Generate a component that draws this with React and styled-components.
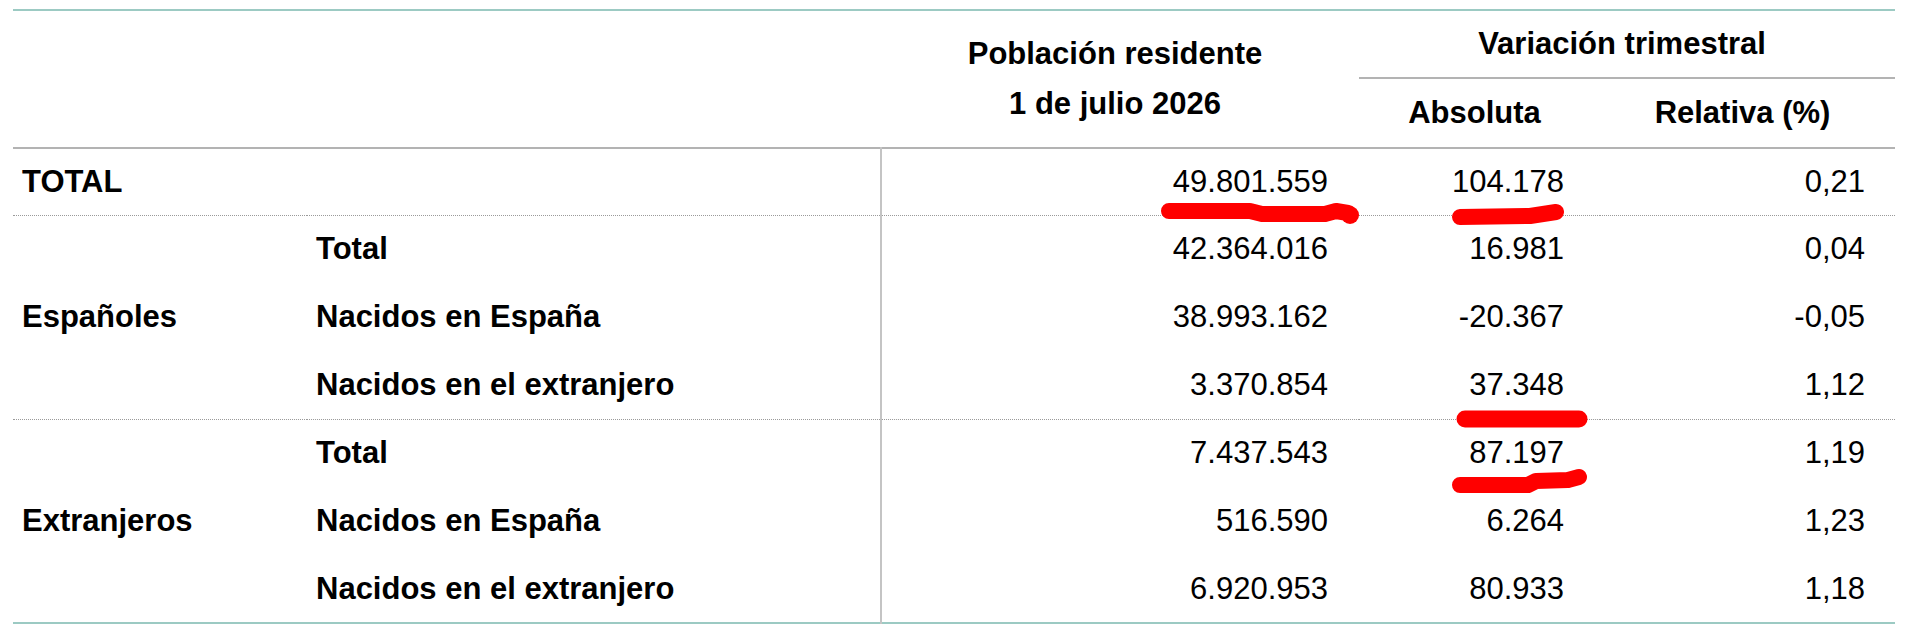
import React from "react";
import styled, { createGlobalStyle } from "styled-components";

const GlobalStyle = createGlobalStyle`
  html, body {
    margin: 0;
    padding: 0;
    background: #fff;
  }
`;

const rows = [
  {
    group: "Españoles",
    items: [
      { label: "Total", value: "42.364.016", abs: "16.981", rel: "0,04" },
      { label: "Nacidos en España", value: "38.993.162", abs: "-20.367", rel: "-0,05" },
      { label: "Nacidos en el extranjero", value: "3.370.854", abs: "37.348", rel: "1,12" },
    ],
    h: 68,
  },
  {
    group: "Extranjeros",
    items: [
      { label: "Total", value: "7.437.543", abs: "87.197", rel: "1,19" },
      { label: "Nacidos en España", value: "516.590", abs: "6.264", rel: "1,23" },
      { label: "Nacidos en el extranjero", value: "6.920.953", abs: "80.933", rel: "1,18" },
    ],
    h: 68,
  },
];

function App() {
  return (
    <Page>
      <GlobalStyle />
      <Table>
        <colgroup>
          <col style={{ width: 294 }} />
          <col style={{ width: 574 }} />
          <col style={{ width: 478 }} />
          <col style={{ width: 241 }} />
          <col style={{ width: 295 }} />
        </colgroup>
        <Head>
          <tr>
            <HeadCell colSpan={2} rowSpan={2} />
            <HeadCell rowSpan={2} $tall>
              Población residente
              <br />1 de julio 2026
            </HeadCell>
            <HeadCell colSpan={2} $divider $h={66}>
              Variación trimestral
            </HeadCell>
          </tr>
          <tr>
            <HeadCell $h={68}>Absoluta</HeadCell>
            <HeadCell>Relativa (%)</HeadCell>
          </tr>
        </Head>
        <Group>
          <Row $h={67}>
            <Label colSpan={2}>TOTAL</Label>
            <Num $first $pad={31}>49.801.559</Num>
            <Num $pad={36}>104.178</Num>
            <Num $pad={30}>0,21</Num>
          </Row>
        </Group>
        {rows.map((g) => (
          <Group key={g.group} $dotted>
            {g.items.map((r, i) => (
              <Row key={r.label} $h={g.h}>
                {i === 0 && <Label rowSpan={3}>{g.group}</Label>}
                <SubLabel>{r.label}</SubLabel>
                <Num $first $pad={31}>{r.value}</Num>
                <Num $pad={36}>{r.abs}</Num>
                <Num $pad={30}>{r.rel}</Num>
              </Row>
            ))}
          </Group>
        ))}
      </Table>

      {/* hand-drawn red marker strokes */}
      <Marks width="1920" height="644" viewBox="0 0 1920 644">
        <g fill="none" stroke="#ff0000" strokeLinecap="round" strokeLinejoin="round" strokeWidth="16">
          <path d="M1169 211 L1250 211 L1262 214 L1325 214 L1336 211 L1348 213" />
          <path d="M1460 217 L1530 216 L1556 212" />
          <path d="M1465 419 L1579 419" strokeWidth="17" />
          <path d="M1460 485 L1528 485 L1536 481 L1568 480 L1579 477" />
        </g>
        <circle cx="1350" cy="215" r="9" fill="#ff0000" />
      </Marks>
    </Page>
  );
}

export default App;

const Page = styled.div`
  position: relative;
  width: 1920px;
  height: 644px;
  overflow: hidden;
`;

const Table = styled.table`
  width: 1882px;
  margin: 9px 0 0 13px;
  border-collapse: collapse;
  table-layout: fixed;
  font-family: "Liberation Sans", Arial, sans-serif;
  font-size: 31px;
  color: #000;
  border-top: 2px solid #9ccac3;
  border-bottom: 2px solid #9ccac3;
`;

const Head = styled.thead`
  border-bottom: 2px solid #b3b3b3;
`;

const HeadCell = styled.th`
  padding: 0 10px 0 0;
  font-weight: bold;
  text-align: center;
  vertical-align: middle;
  line-height: ${(p) => (p.$tall ? "50px" : "36px")};
  height: ${(p) => (p.$h ? `${p.$h}px` : "auto")};
  border-bottom: ${(p) => (p.$divider ? "2px solid #b3b3b3" : "none")};
`;

const Group = styled.tbody`
  border-top: ${(p) => (p.$dotted ? "1px dotted #9a9a9a" : "none")};
`;

const Row = styled.tr`
  height: ${(p) => p.$h}px;
`;

const Label = styled.td`
  padding: 0 0 0 9px;
  font-weight: bold;
  vertical-align: middle;
  white-space: nowrap;
`;

const SubLabel = styled.td`
  padding: 0 0 0 9px;
  font-weight: bold;
  vertical-align: middle;
  white-space: nowrap;
`;

const Num = styled.td`
  padding: 0 ${(p) => p.$pad}px 0 0;
  text-align: right;
  vertical-align: middle;
  white-space: nowrap;
  border-left: ${(p) => (p.$first ? "2px solid #c4c4c4" : "none")};
`;

const Marks = styled.svg`
  position: absolute;
  top: 0;
  left: 0;
  pointer-events: none;
`;
